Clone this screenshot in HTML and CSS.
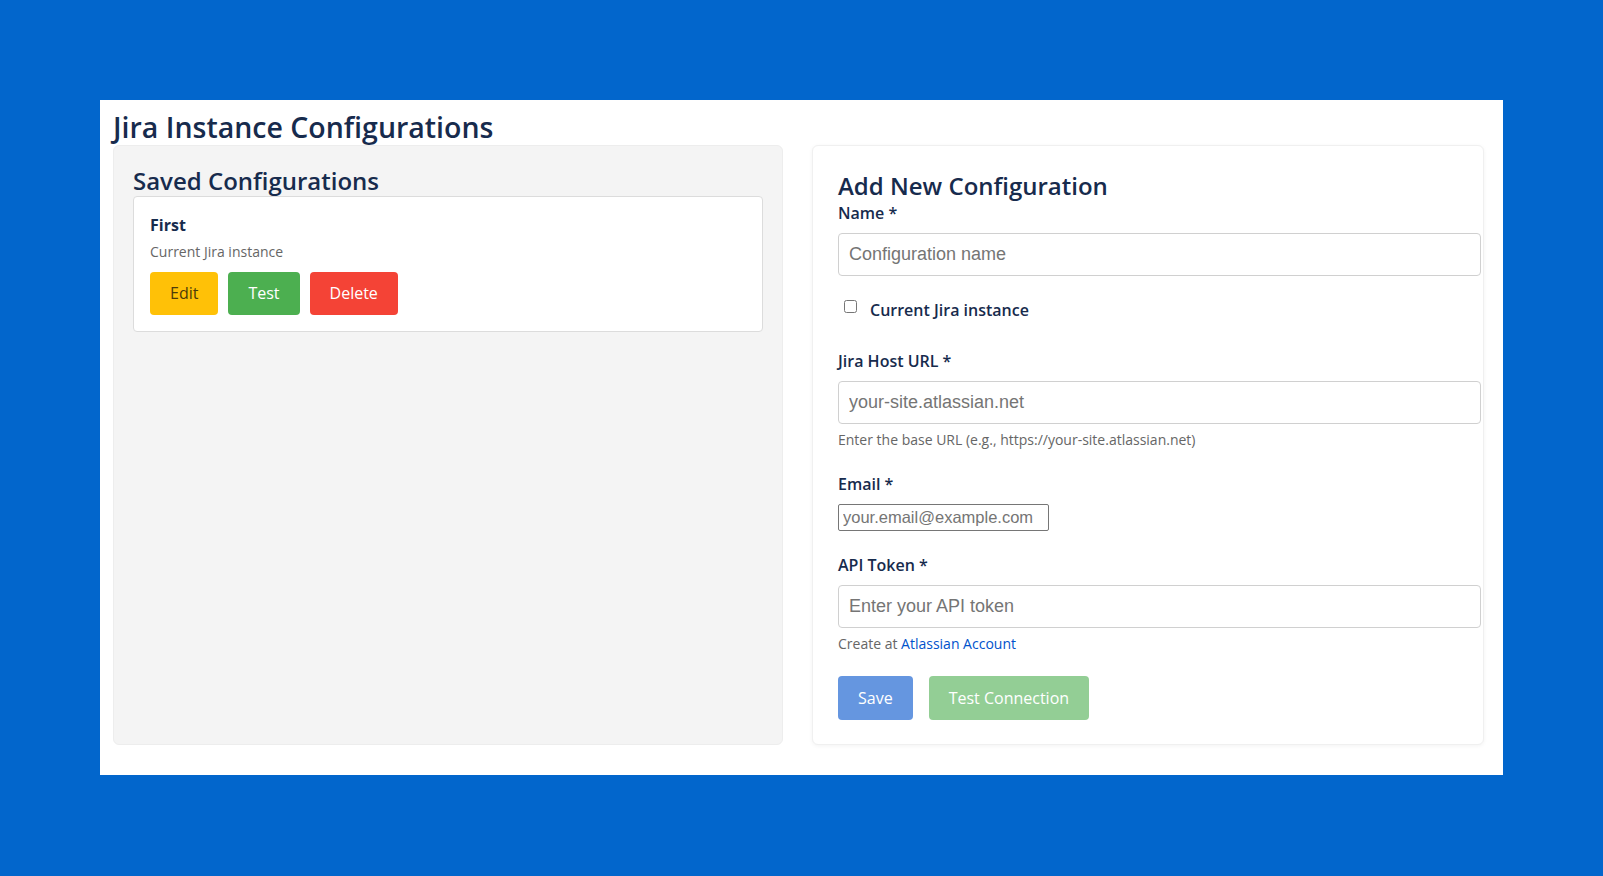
FILE: index.html
```html
<!DOCTYPE html>
<html lang="en">
<head>
    <meta charset="UTF-8">
    <meta name="viewport" content="width=device-width, initial-scale=1.0">
    <title>Jira Instance Configurations</title>
    <link rel="stylesheet" href="styles.css">
</head>
<body>
    <div class="container">
        <h1>Jira Instance Configurations</h1>
        <div class="layout">
            <div class="saved-panel">
                <h2>Saved Configurations</h2>
                <div class="config-card">
                    <div class="config-name">First</div>
                    <div class="config-note">Current Jira instance</div>
                    <div class="card-actions">
                        <button class="btn btn-edit">Edit</button>
                        <button class="btn btn-test">Test</button>
                        <button class="btn btn-delete">Delete</button>
                    </div>
                </div>
            </div>
            <div class="form-panel">
                <h2>Add New Configuration</h2>
                <form id="configForm">
                    <div class="form-group">
                        <label for="name">Name *</label>
                        <input type="text" id="name" class="text-input" placeholder="Configuration name">
                    </div>
                    <div class="form-group check-group">
                        <label class="check-label"><input type="checkbox" id="isCurrent">Current Jira instance</label>
                    </div>
                    <div class="form-group">
                        <label for="host">Jira Host URL *</label>
                        <input type="text" id="host" class="text-input" placeholder="your-site.atlassian.net">
                        <div class="help">Enter the base URL (e.g., https://your-site.atlassian.net)</div>
                    </div>
                    <div class="form-group">
                        <label for="email">Email *</label>
                        <input type="email" id="email" class="plain-input" placeholder="your.email@example.com">
                    </div>
                    <div class="form-group">
                        <label for="token">API Token *</label>
                        <input type="password" id="token" class="text-input" placeholder="Enter your API token">
                        <div class="help">Create at <a href="#">Atlassian Account</a></div>
                    </div>
                    <div class="form-actions">
                        <button type="submit" class="btn btn-save" disabled>Save</button>
                        <button type="button" class="btn btn-test" disabled>Test Connection</button>
                    </div>
                </form>
            </div>
        </div>
    </div>
</body>
</html>
```

FILE: styles.css
```css
body {
    margin: 0;
    background-color: #0266cc;
    font-family: "Open Sans", "Noto Sans", sans-serif;
    color: #172b4d;
}

.container {
    width: 1371px;
    margin: 100px auto;
    padding: 0 19px 30px 13px;
    background-color: #ffffff;
}

h1 {
    margin: 0;
    padding-top: 10px;
    font-size: 28.5px;
    line-height: 35px;
    font-weight: 600;
}

h2 {
    margin: 0;
    font-size: 24px;
    line-height: 30px;
    font-weight: 600;
}

.layout {
    display: grid;
    grid-template-columns: 670px 1fr;
    gap: 29px;
}

.saved-panel {
    background-color: #f4f4f4;
    border: 1px solid #ededed;
    border-radius: 6px;
    padding: 20px 19px;
}

.config-card {
    background-color: #ffffff;
    border: 1px solid #dcdcdc;
    border-radius: 4px;
    padding: 16px;
}

.config-name {
    font-size: 16px;
    line-height: 24px;
    font-weight: 700;
}

.config-note {
    margin-top: 5px;
    font-size: 14px;
    line-height: 20px;
    color: #666666;
}

.card-actions {
    display: flex;
    gap: 10px;
    margin-top: 10px;
}

.btn {
    border: none;
    border-radius: 4px;
    padding: 10px 20px;
    font-family: inherit;
    font-size: 16px;
    line-height: 23px;
    color: #ffffff;
    cursor: pointer;
}

.btn-edit {
    background-color: #ffc107;
    color: #4d3b0a;
}

.btn-test {
    background-color: #4caf50;
}

.btn-delete {
    background-color: #f44336;
}

.btn-save {
    background-color: #0052cc;
}

.btn:disabled {
    opacity: 0.6;
    cursor: default;
}

.form-panel {
    background-color: #ffffff;
    border: 1px solid #f0f0f0;
    border-radius: 6px;
    box-shadow: 0 1px 4px rgba(0, 0, 0, 0.05);
    padding: 25px 24px 24px 25px;
}

.form-group {
    margin-bottom: 22px;
}

.form-group label {
    display: block;
    margin-bottom: 8px;
    font-size: 16px;
    line-height: 24px;
    font-weight: 600;
}

.text-input {
    display: block;
    width: 100%;
    height: 21px;
    padding: 10px;
    border: 1px solid #d0d0d0;
    border-radius: 4px;
    font-family: "Liberation Sans", Arial, sans-serif;
    font-size: 18px;
    color: #172b4d;
}

.text-input::placeholder,
.plain-input::placeholder {
    color: #757575;
}

.plain-input {
    display: block;
    box-sizing: border-box;
    width: 211px;
    height: 27px;
    margin-top: 2px;
    padding: 1px 4px;
    border: 1px solid #767676;
    border-radius: 2px;
    font-family: "Liberation Sans", Arial, sans-serif;
    font-size: 16.5px;
}

.check-group {
    margin-bottom: 27px;
}

.form-group .check-label {
    margin: 0;
}

.check-label input {
    width: 13px;
    height: 13px;
    margin: 0 13px 0 6px;
    vertical-align: 3px;
}

.help {
    margin-top: 6px;
    font-size: 14px;
    line-height: 20px;
    color: #666666;
}

.help a {
    color: #0052cc;
    text-decoration: none;
}

.form-actions {
    display: flex;
    gap: 16px;
    margin-top: 15px;
}

.form-actions .btn {
    line-height: 24px;
}
```
